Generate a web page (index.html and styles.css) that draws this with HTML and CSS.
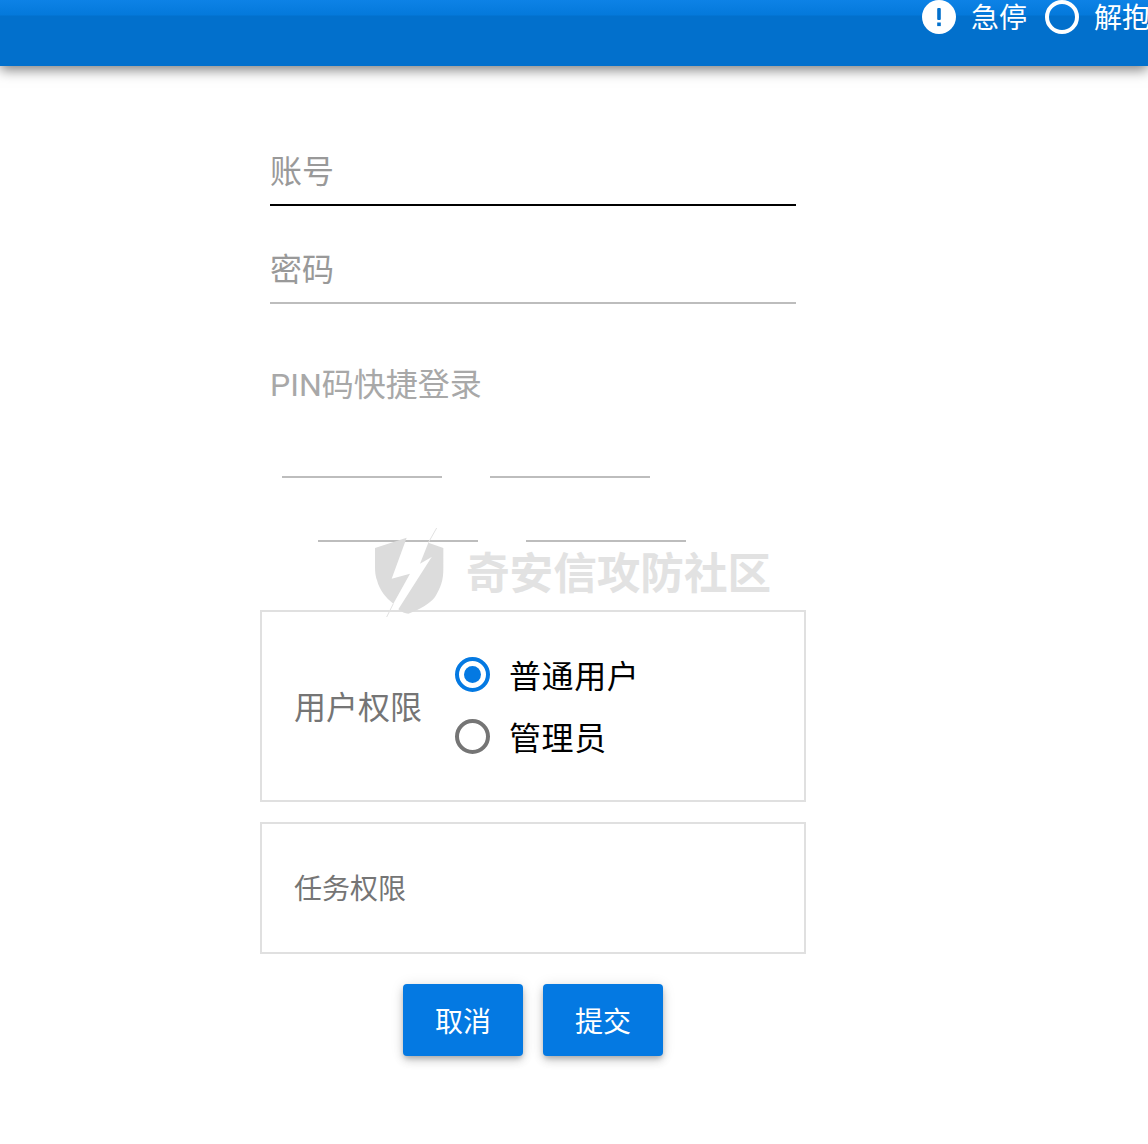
FILE: index.html
```html
<!DOCTYPE html>
<html lang="zh">
<head>
<meta charset="utf-8">
<title>用户</title>
<link rel="stylesheet" href="styles.css">
</head>
<body>
<header class="topbar">
  <div class="status">
    <svg class="icon" viewBox="0 0 34 34"><circle cx="17" cy="17" r="17" fill="#fff"/><rect x="15.2" y="8" width="3.6" height="12" rx="1" fill="#0270cc"/><rect x="15.2" y="22.5" width="3.6" height="3.6" fill="#0270cc"/></svg>
    <span class="status-text">急停</span>
    <svg class="icon" viewBox="0 0 34 34"><circle cx="17" cy="17" r="15" fill="none" stroke="#fff" stroke-width="4"/></svg>
    <span class="status-text status-last">解抱</span>
  </div>
</header>
<main class="form">
  <div class="field field-active"><span class="hint">账号</span></div>
  <div class="field"><span class="hint">密码</span></div>
  <div class="pin">
    <div class="pin-label">PIN码快捷登录</div>
    <div class="pin-row pin-row-a"><span class="pin-cell"></span><span class="pin-cell"></span></div>
    <div class="pin-row pin-row-b"><span class="pin-cell"></span><span class="pin-cell"></span></div>
  </div>
  <section class="box box-role">
    <span class="box-label">用户权限</span>
    <div class="radios">
      <div class="radio"><span class="dot dot-on"></span><span class="radio-text">普通用户</span></div>
      <div class="radio"><span class="dot"></span><span class="radio-text">管理员</span></div>
    </div>
  </section>
  <section class="box box-task"><span class="box-label-sm">任务权限</span></section>
  <div class="actions">
    <button class="btn" type="button">取消</button>
    <button class="btn" type="button">提交</button>
  </div>
</main>
<div class="watermark">
  <svg class="wm-logo" viewBox="0 0 270 300">
    <path d="M30 78 L125 47 L80 170 L135 155 L85 245 C62 228 44 205 36 175 C31 160 30 150 30 130 Z" fill="#dcdcdc"/>
    <path d="M190 62 L165 125 L200 105 L100 262 C110 270 120 275 130 275 C165 262 195 245 210 225 C228 195 235 175 235 140 L235 78 Z" fill="#dcdcdc"/>
    <path d="M215 18 L190 62 M85 245 L65 285" stroke="#e2e2e2" stroke-width="3" fill="none"/>
  </svg>
  <span class="wm-text">奇安信攻防社区</span>
</div>
</body>
</html>
```
FILE: styles.css
```css
* { box-sizing: border-box; }
html, body { margin: 0; padding: 0; }
body {
  position: relative;
  height: 1144px;
  overflow: hidden;
  background: #fff;
  font-family: Roboto, "Noto Sans CJK SC", sans-serif;
}
.topbar {
  height: 66px;
  background: linear-gradient(#0d82e6 0, #0479db 15px, #0270cc 16px, #0270cc 100%);
  box-shadow: 0 4px 12px rgba(0,0,0,.5);
  overflow: hidden;
}
.status {
  display: flex;
  align-items: flex-start;
  justify-content: flex-end;
  height: 40px;
  margin-right: -2px;
  color: #fff;
  font-size: 28px;
}
.icon { width: 34px; height: 34px; flex: none; }
.status-text { margin: 0 18px 0 15px; white-space: nowrap; line-height: 38px; }
.status-last { margin-right: 0; }
.form {
  width: 546px;
  margin: 0 0 0 260px;
  display: flex;
  flex-direction: column;
}
.field {
  margin: 44px 10px 0;
  height: 54px;
  border-bottom: 2px solid #bdbdbd;
  font-size: 32px;
  line-height: 40px;
}
.field-active { border-bottom-color: #000; margin-top: 86px; }
.hint { display: block; color: #999; }
.pin { padding: 61px 10px 0; height: 306px; }
.pin-label { font-size: 32px; line-height: 40px; color: #a8a8a8; }
.pin-row { display: flex; gap: 48px; }
.pin-cell { width: 160px; height: 2px; background: #bdbdbd; }
.pin-row-a { margin: 71px 0 0 12px; }
.pin-row-b { margin: 62px 0 0 48px; }
.box {
  border: 2px solid #e0e0e0;
  display: flex;
  align-items: center;
  padding-left: 32px;
}
.box-role { height: 192px; }
.box-task { height: 132px; margin-top: 20px; }
.box-label { font-size: 32px; color: #757575; margin-right: 33px; position: relative; top: -1px; }
.box-label-sm { font-size: 28px; color: #757575; position: relative; top: -1px; }
.radios { display: flex; flex-direction: column; gap: 22px; margin-top: -2px; }
.radio { display: flex; align-items: center; gap: 19px; font-size: 32px; color: #000; height: 40px; }
.radio-text { letter-spacing: .6px; }
.dot {
  width: 35px; height: 35px;
  border: 4px solid #757575;
  border-radius: 50%;
  flex: none;
  background: #fff;
  position: relative;
}
.dot-on { border-color: #0479e2; }
.dot-on::after {
  content: "";
  position: absolute;
  left: 5px; top: 5px;
  width: 17px; height: 17px;
  border-radius: 50%;
  background: #0479e2;
}
.actions { display: flex; justify-content: center; gap: 20px; margin-top: 30px; }
.btn {
  width: 120px;
  height: 72px;
  border: 0;
  border-radius: 4px;
  background: #0479e2;
  color: #fff;
  font: inherit;
  font-size: 28px;
  box-shadow: 0 3px 5px -1px rgba(0,0,0,.2), 0 5px 10px rgba(0,0,0,.14), 0 1px 14px rgba(0,0,0,.1);
}
.watermark {
  position: absolute;
  left: 365px;
  top: 522px;
  display: flex;
  align-items: center;
  gap: 11px;
  pointer-events: none;
}
.wm-logo { width: 90px; height: 100px; flex: none; }
.wm-text { font-size: 43.6px; font-weight: 700; color: #e2e2e2; white-space: nowrap; position: relative; top: -2px; }
```
